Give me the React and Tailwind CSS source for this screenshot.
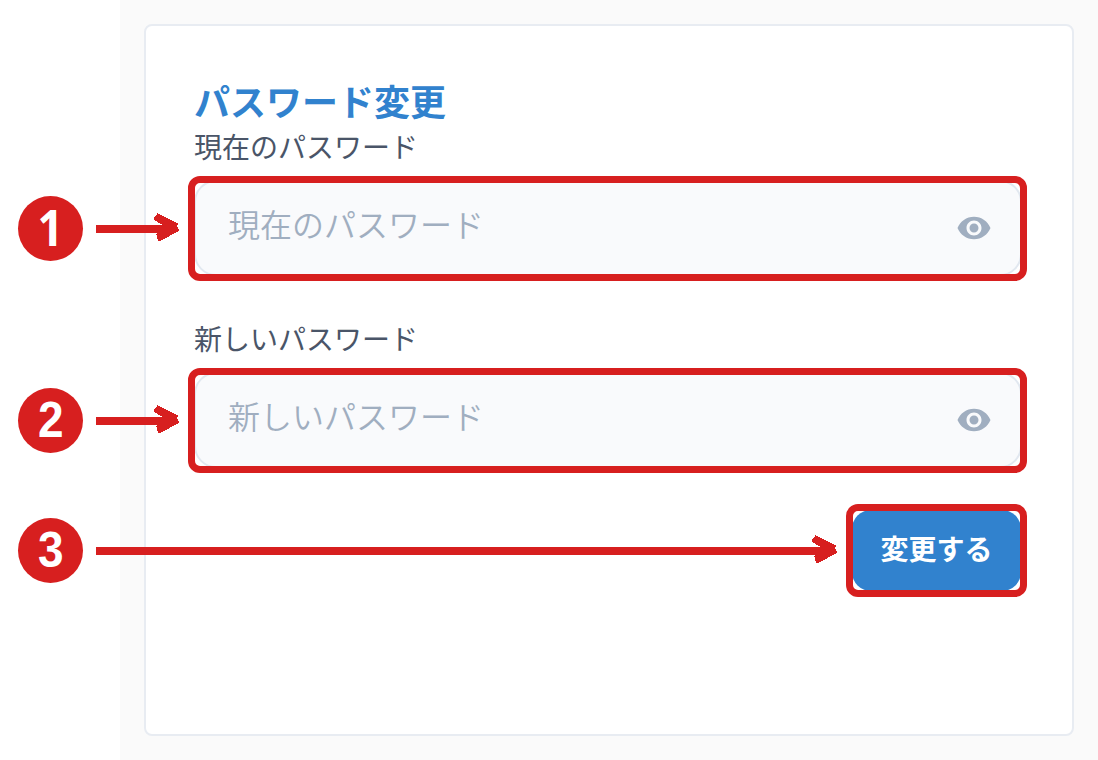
import { MdVisibility } from "react-icons/md";

const FIELDS = [
  { step: 1, label: "現在のパスワード" },
  { step: 2, label: "新しいパスワード" }
];

// Open Sans draws its 1 without a foot
const DIGIT_FONTS = {
  1: "font-['Open_Sans',sans-serif] -translate-y-[1.5px] scale-x-90",
  2: "font-['Liberation_Sans',sans-serif] scale-x-[0.92]",
  3: "font-['Liberation_Sans',sans-serif] scale-x-[0.92]"
};

// Numbered badge with an arrow, placed over the page beside its target
function Callout({ step, length, className }) {
  const tip = length - 2;
  return (
    <div className={`absolute flex items-center gap-[13px] ${className}`}>
      <span className="flex h-[65px] w-[65px] shrink-0 items-center justify-center rounded-full bg-[#d71f1f] pb-0.5 text-[50px] font-bold leading-none text-white">
        <span className={DIGIT_FONTS[step]}>{step}</span>
      </span>
      <svg
        width={length}
        height="33"
        viewBox={`0 0 ${length} 33`}
        className="shrink-0"
        fill="#d71f1f"
        shapeRendering="crispEdges"
      >
        <rect x="0" y="13" width={tip - 10} height="8" />
        <path
          d={`M${tip - 21.5} 1 L${tip - 2} 11 L${tip - 1} 12 L${tip - 2} 14.5 L${tip} 18 L${tip} 19 L${tip - 20} 29.5 L${tip - 22} 26 L${tip - 22} 24 L${tip - 24} 22 L${tip - 18} 20 L${tip - 17} 12.5 L${tip - 25} 8 L${tip - 25} 6 L${tip - 22} 2 Z`}
        />
      </svg>
    </div>
  );
}

function PasswordField({ step, label }) {
  return (
    <div className="relative -ml-1.5 h-[105px] w-[839px]">
      <div className="h-full overflow-hidden rounded-xl border-[7px] border-[#d71f1f]">
        <div className="-ml-px -mt-[3px] flex h-24 w-[828px] items-center justify-between rounded-[22px] border-2 border-[#e2e8f0] bg-[#f9fafc] pl-8 pr-7">
          <span className="-mt-2.5 text-[32px] font-[350] leading-none text-[#a0aec0]">{label}</span>
          <MdVisibility size={36} color="#a0aec0" />
        </div>
      </div>
      <Callout step={step} length={85} className="-left-[170px] top-5" />
    </div>
  );
}

export default function App() {
  return (
    <div className="h-[760px] w-[1098px] overflow-hidden bg-white pl-[120px] font-['Noto_Sans_CJK_JP',sans-serif]">
      <div className="h-full bg-[#fafafa] p-6">
        <div className="h-[712px] w-[930px] rounded-lg border-2 border-[#e8ecf2] bg-white px-12 pt-[47px]">
          <h1 className="mb-px text-4xl font-bold leading-[54px] text-[#3182ce]">パスワード変更</h1>

          <div className="flex flex-col gap-[39px]">
            {FIELDS.map((field) => (
              <div key={field.step}>
                <p className="mb-3 text-[28px] leading-9 text-[#4a5568]">{field.label}</p>
                <PasswordField step={field.step} label={field.label} />
              </div>
            ))}
          </div>

          <div className="relative -ml-1.5 mt-[31px] flex w-[839px] justify-end">
            <div className="h-[93px] w-[181px] overflow-hidden rounded-xl border-[7px] border-[#d71f1f]">
              <button className="-ml-px -mt-px h-[81px] w-[169px] rounded-[19px] bg-[#3182ce] pb-[5px] text-[28px] font-bold leading-none text-white">
                変更する
              </button>
            </div>
            <Callout step={3} length={743} className="-left-[170px] top-3.5" />
          </div>
        </div>
      </div>
    </div>
  );
}
